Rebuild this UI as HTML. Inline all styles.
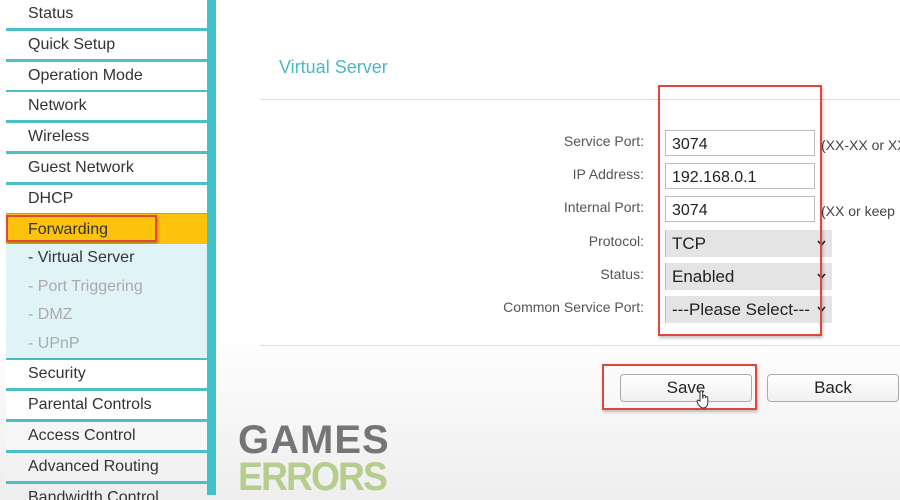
<!DOCTYPE html><html><head><style>
html,body{margin:0;width:900px;height:500px;overflow:hidden}
body{background:linear-gradient(#fff 0,#fff 330px,#eee 500px);font-family:"Liberation Sans",sans-serif;position:relative}
.a{position:absolute;white-space:nowrap}
.row{position:absolute;left:6px;width:201px;height:28px;background:#fff;border-bottom:3px solid #4bbfc9;font-size:16px;color:#333}
.row span{position:absolute;left:22px;top:5px;white-space:nowrap}
.sub{position:absolute;left:28px;font-size:16px;color:#aaa}
.lbl{position:absolute;right:256px;font-size:14px;color:#555;white-space:nowrap}
.inp{position:absolute;left:665px;width:150px;height:26px;border:1px solid #bbb;background:#fff;box-sizing:border-box;font-size:16px;padding:5px 6px;color:#222}
.sel{position:absolute;left:665px;width:167px;height:27px;background:#e4e4e4;border-left:1px solid #bbb;box-sizing:border-box;font-size:17px;padding:4px 6px;color:#222;white-space:nowrap}
.sel svg{position:absolute;right:6px;top:10px}
.btn{position:absolute;top:374px;height:26px;border:1px solid #aaa;border-radius:4px;background:linear-gradient(#fff,#f0f0f0);font-size:17px;text-align:center;line-height:26px;color:#222}
</style></head><body>
<div class="a" style="left:207px;top:0;width:9px;height:495px;background:#42c1ca"></div>
<div class="row" style="top:0"><span>Status</span></div>
<div class="row" style="top:31px"><span>Quick Setup</span></div>
<div class="row" style="top:62px"><span>Operation Mode</span></div>
<div class="row" style="top:92px"><span>Network</span></div>
<div class="row" style="top:123px"><span>Wireless</span></div>
<div class="row" style="top:154px"><span>Guest Network</span></div>
<div class="row" style="top:185px"><span>DHCP</span></div>
<div class="a" style="left:6px;top:214px;width:201px;height:30px;background:#fcc30c"></div>
<div class="a" style="left:6px;top:215px;width:151px;height:27px;border:2px solid #e0463a;box-sizing:border-box;box-shadow:1px 2px 3px rgba(0,0,0,.3)"></div>
<div class="a" style="left:28px;top:221px;font-size:16px;color:#333">Forwarding</div>
<div class="a" style="left:6px;top:244px;width:201px;height:114px;background:#e0f4f8;border-bottom:2px solid #4bbfc9"></div>
<div class="sub" style="top:249px;color:#333">- Virtual Server</div>
<div class="sub" style="top:278px">- Port Triggering</div>
<div class="sub" style="top:306px">- DMZ</div>
<div class="sub" style="top:335px">- UPnP</div>
<div class="row" style="top:360px"><span>Security</span></div>
<div class="row" style="top:391px"><span>Parental Controls</span></div>
<div class="row" style="top:422px;background:#f6f6f6"><span>Access Control</span></div>
<div class="row" style="top:453px;background:#f2f2f2"><span>Advanced Routing</span></div>
<div class="row" style="top:484px;border:none;background:#eee;overflow:hidden;height:16px"><span>Bandwidth Control</span></div>
<div class="a" style="left:279px;top:57px;font-size:18px;color:#4bb6c6">Virtual Server</div>
<div class="a" style="left:260px;top:99px;width:640px;height:1px;background:#ddd"></div>
<div class="a" style="left:260px;top:345px;width:640px;height:1px;background:#ddd"></div>
<div class="lbl" style="top:133px">Service Port:</div>
<div class="lbl" style="top:166px">IP Address:</div>
<div class="lbl" style="top:199px">Internal Port:</div>
<div class="lbl" style="top:233px">Protocol:</div>
<div class="lbl" style="top:266px">Status:</div>
<div class="lbl" style="top:299px">Common Service Port:</div>
<div class="inp" style="top:130px">3074</div>
<div class="inp" style="top:163px">192.168.0.1</div>
<div class="inp" style="top:196px">3074</div>
<div class="a" style="left:821px;top:137px;font-size:14px;color:#444">(XX-XX or XX)</div>
<div class="a" style="left:821px;top:203px;font-size:14px;color:#444">(XX or keep</div>
<div class="sel" style="top:230px">TCP<svg width="9" height="6"><path d="M1 1L4.5 5L8 1" stroke="#222" stroke-width="1.6" fill="none"/></svg></div>
<div class="sel" style="top:263px">Enabled<svg width="9" height="6"><path d="M1 1L4.5 5L8 1" stroke="#222" stroke-width="1.6" fill="none"/></svg></div>
<div class="sel" style="top:296px">---Please Select---<svg width="9" height="6"><path d="M1 1L4.5 5L8 1" stroke="#222" stroke-width="1.6" fill="none"/></svg></div>
<div class="a" style="left:658px;top:85px;width:164px;height:251px;border:2px solid #e0463a;box-sizing:border-box;box-shadow:1px 2px 3px rgba(0,0,0,.25)"></div>
<div class="btn" style="left:620px;width:130px">Save</div>
<div class="btn" style="left:767px;width:130px">Back</div>
<div class="a" style="left:602px;top:364px;width:155px;height:46px;border:2px solid #e0463a;box-sizing:border-box;box-shadow:1px 2px 3px rgba(0,0,0,.25)"></div>
<svg class="a" style="left:696px;top:389px" width="14" height="20"><path d="M4 12V3a1.3 1.3 0 0 1 2.6 0v6h.4V7.5a1.2 1.2 0 0 1 2.4 0V9a1.2 1.2 0 0 1 2.4 0v5c0 3-2 5-4.5 5S3.5 17 2 15L1 12.5a1.2 1.2 0 0 1 2-1Z" fill="#fff" stroke="#333" stroke-width="1"/></svg>
<div class="a" style="left:238px;top:420px;font-size:40px;font-weight:bold;color:#757575;letter-spacing:1px;line-height:40px">GAMES</div>
<div class="a" style="left:238px;top:457px;font-size:40px;font-weight:bold;color:#b5cd8d;letter-spacing:-2px;line-height:40px;transform:scaleX(0.93);transform-origin:left">ERRORS</div>
</body></html>
